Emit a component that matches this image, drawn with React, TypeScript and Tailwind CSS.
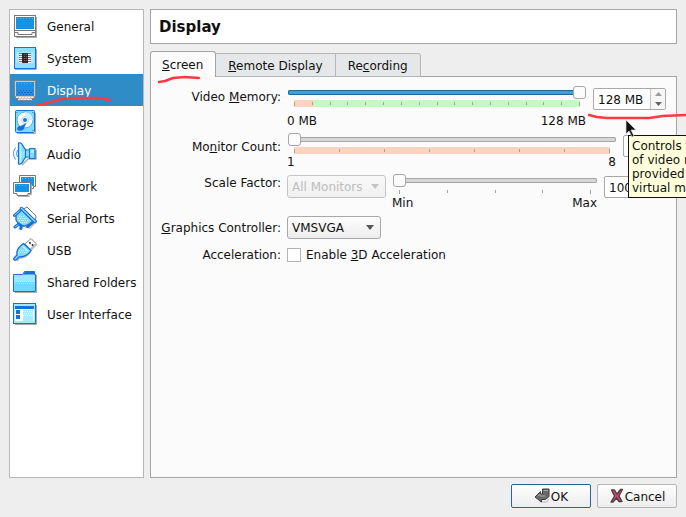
import React from "react";

const B = "#1a6fd4";
const L = "#7fdcfd";

function Icon({ name }: { name: string }) {
  return (
    <svg width="24" height="24" viewBox="0 0 24 24" className="shrink-0" aria-hidden="true">
      {name === "General" && (
        <g>
          <path d="M3 23.500H23.500V3" fill="none" stroke="#aaa" />
          <rect x="1.500" y="1.500" width="21" height="21" fill="#fff" stroke="#777" />
          <rect x="3" y="3" width="18" height="12" fill="#1492e6" />
          <path d="M4 4.500h16" stroke="#4db1f2" strokeDasharray="1 2" />
          <path d="M2 16.500h20M2 18.500h3v2h14v-2h3" fill="none" stroke="#777" />
        </g>
      )}
      {name === "System" && (
        <g>
          <path d="M2 23.500H23.500V3" fill="none" stroke="#aaa" />
          <rect x="1.500" y="1.500" width="21" height="21" fill="#8be0fd" stroke={B} />
          <rect x="3" y="6" width="18" height="11" fill="#a9ebff" />
          <path d="M6 8.500h12M6 10.500h12M6 12.500h12M6 14.500h12M6 16.500h12" stroke="#fff" />
          <path d="M6 7.500h12M6 9.500h12M6 11.500h12M6 13.500h12M6 15.500h12" stroke="#3c86c8" />
          <rect x="9" y="7" width="6" height="10" fill="#2c2c2c" />
          <path d="M11.500 8v8M13.500 8v8" stroke="#666" strokeDasharray="1 1" />
        </g>
      )}
      {name === "Display" && (
        <g>
          <path d="M1.500 2.500h21v16h-1v2h-3v2h-13v-2h-3v-2h-1z" fill="#c9ccc6" stroke="#77868d" />
          <path d="M3 19.500h18M5 21.500h14" stroke="#eceee8" strokeDasharray="2 1" />
          <rect x="3" y="4" width="18" height="14" fill="#1e91e4" />
          <path d="M5 5.500h14" stroke="#59aeea" strokeDasharray="1 2" />
          <path d="M4 12.500h16M4 16.500h16" stroke="#1766c9" strokeDasharray="1 2" />
          <path d="M5 14.500h15" stroke="#1766c9" strokeDasharray="2 1" />
        </g>
      )}
      {name === "Storage" && (
        <g>
          <path d="M4 23.500H22.500V3" fill="none" stroke="#aaa" />
          <rect x="2.500" y=".5" width="19" height="22" rx="1" fill={L} stroke={B} />
          <circle cx="12" cy="10" r="8" fill="#fff" stroke="#4db4f1" />
          <path d="M12 2a8 8 0 0 1 8 8h-4a4 4 0 0 0-4-4z" fill="#cdf3ff" />
          <circle cx="12" cy="10" r="3.500" fill="none" stroke="#9be2fc" />
          <circle cx="12" cy="10" r="2" fill="#1673d6" />
          <path d="M4.500 20c-1-3 1-4 3-4l6-3-2 4c0 3-4 5-7 3z" fill={B} />
          <path d="M4 2v1M20 2v1M20 20v1" stroke={B} />
        </g>
      )}
      {name === "Audio" && (
        <g strokeLinejoin="round">
          <path d="M9 23l6-6h8V8" fill="none" stroke="#aaa" strokeWidth="1.500" />
          <path d="M5.500 1c2-1 4 1 6 5.500l2 1.500h3V6.500h5.500v10h-5.500V15h-3l-2 1.500c-2 4.500-4 6.500-6 5.500z" fill={L} stroke={B} strokeWidth="1.200" />
          <path d="M16.500 7v9M12.500 8v7" stroke={B} />
          <path d="M7.500 2v19" stroke="#b5f0ff" strokeWidth="1.500" />
          <path d="M8 10.500h4M8 12.500h4M8 14.500h3" stroke="#c8f4ff" strokeDasharray="1 1" />
          <path d="M18 8h3v3h-3z" fill="#b5f0ff" />
          <path d="M4.500 8q-2 3.500 0 7M2.500 5.500q-4 6 0 12" fill="none" stroke="#3697e8" />
        </g>
      )}
      {name === "Network" && (
        <g>
          <path d="M6.500 1.500h16v11h-2v2h-12v-2h-2z" fill="#fff" stroke="#777" />
          <rect x="8" y="3" width="13" height="9" fill="#1492e6" />
          <path d="M5 22.500h11v-2h2.500v-10" fill="none" stroke="#aaa" />
          <path d="M.5 8.500h17v11h-2.500v2h-11v-2h-3.500z" fill="#fff" stroke="#777" />
          <rect x="2" y="10" width="14" height="8" fill="#1492e6" />
          <path d="M9 4.500h11M3 11.500h12" stroke="#62bcf5" strokeDasharray="1 2" />
        </g>
      )}
      {name === "Serial Ports" && (
        <g strokeLinejoin="round" strokeLinecap="round">
          <path d="M6 23l4-3 7 2 7-7" fill="none" stroke="#bbb" strokeWidth="1.500" />
          <path d="M10.500 3l3.500-2 9 9-.5 4z" fill="#fff" stroke="#777" />
          <path d="M8 3.500L20 15l-3 3-6 2-5-1-3-5V9z" fill={L} stroke={B} strokeWidth="1.300" />
          <path d="M8.500 2.500L22 15.500" stroke={B} strokeWidth="3.500" />
          <path d="M8.500 2.500L22 15.500" stroke="#8fe0ff" strokeWidth="1.300" />
          <path d="M1.500 9.500L7 4.500M14.500 20.500l5-4M2 21l4-3M8 22.500v-3" stroke={B} strokeWidth="3" />
          <path d="M1.800 9.200L6.500 5M2.200 20.800L5 19" stroke={L} strokeWidth="1" />
          <path d="M6 10.500h6M5 12.500h9M6 14.500h10M7 16.500h7" stroke="#c8f5ff" strokeDasharray="1 1" strokeLinecap="butt" />
        </g>
      )}
      {name === "USB" && (
        <g strokeLinejoin="round">
          <path d="M12 6l6-5.500 5 5-6 6z" fill="#fff" stroke="#888" />
          <path d="M17 4v2M19.500 6v2" stroke="#333" strokeWidth="1.500" />
          <path d="M4 23l3-3c5 0 9-2 12-9l5-5" fill="none" stroke="#bbb" strokeWidth="1.500" />
          <path d="M10.500 5.500l7.500 7c-3 5-7 6.500-12 6.500l-3 3c-1 1-3-1-2-2l3-3c-1-5 2-8.500 6.500-11.500z" fill={L} stroke={B} strokeWidth="1.300" />
          <path d="M9.500 8l6 5.500" stroke="#b9f1ff" strokeWidth="1.500" />
          <path d="M6 12.500h7M5 14.500h9" stroke="#c8f5ff" strokeDasharray="1 1" />
        </g>
      )}
      {name === "Shared Folders" && (
        <g>
          <path d="M2 22.500H23.500V5" fill="none" stroke="#aaa" />
          <path d="M.5 4.500h9l2-3h10v3h1v17H.5z" fill="#9ce7fe" stroke={B} />
          <path d="M10 4.500l2-3h9.500v3z" fill={B} />
          <rect x="1" y="12" width="21" height="9" fill="#6ed8ff" />
          <path d="M1 11.500h21M2 13.500h20" stroke="#acefff" strokeDasharray="1 1" />
        </g>
      )}
      {name === "User Interface" && (
        <g>
          <path d="M2 22.500H23.500V3" fill="none" stroke="#aaa" />
          <rect x=".5" y="1.500" width="22" height="20" fill="#a4e8fe" stroke={B} />
          <rect x="2" y="4" width="19" height="3" fill={B} />
          <rect x="2" y="7" width="19" height="12" fill="#fff" />
          <path d="M3 8h4v4H3zM3 13h4v4H3z" fill={B} />
          <rect x="10" y="8" width="10" height="11" fill="#a6ebff" />
          <path d="M10 9.500h10M11 11.500h9M10 13.500h10" stroke="#e3faff" strokeDasharray="1 1" />
        </g>
      )}
    </svg>
  );
}

const sections = ["General", "System", "Display", "Storage", "Audio", "Network", "Serial Ports", "USB", "Shared Folders", "User Interface"];

const slider =
  "m-0 mb-px block h-[13px] w-full appearance-none bg-transparent [&::-webkit-slider-runnable-track]:h-[5px] [&::-webkit-slider-runnable-track]:rounded-[2px] [&::-webkit-slider-thumb]:-mt-[4px] [&::-webkit-slider-thumb]:h-[13px] [&::-webkit-slider-thumb]:w-[13px] [&::-webkit-slider-thumb]:appearance-none [&::-webkit-slider-thumb]:rounded-[3px] [&::-webkit-slider-thumb]:border [&::-webkit-slider-thumb]:border-[#a6a6a6] [&::-webkit-slider-thumb]:bg-[#fcfcfc]";
const grayTrack =
  "[&::-webkit-slider-runnable-track]:bg-[#d6d6d6] [&::-webkit-slider-runnable-track]:shadow-[inset_0_0_0_1px_#a5a5a5]";
const blueTrack =
  "[&::-webkit-slider-runnable-track]:bg-[#3b9fe0] [&::-webkit-slider-runnable-track]:shadow-[inset_0_0_0_1px_#206796]";

function Ticks({ count, className }: { count: number; className: string }) {
  return (
    <div className={`mx-[7px] flex items-center justify-between ${className}`}>
      {Array.from({ length: count }, (_, i) => (
        <span key={i} className={`w-px bg-[#a5a5a5] ${i === 0 || i === count - 1 ? "h-1" : "h-[3px]"}`} />
      ))}
    </div>
  );
}

function Spin({ id, value, className }: { id: string; value: string; className: string }) {
  return (
    <div className={`mt-[2px] flex h-[22px] shrink-0 overflow-hidden rounded-[2px] border border-[#a8a8a8] bg-white ${className}`}>
      <input id={id} aria-label={id} defaultValue={value} className="w-0 min-w-0 flex-1 pt-px pl-1 outline-none" />
      <div className="flex w-[15px] flex-col border-l border-[#c4c4c4] bg-[#f7f7f7]">
        <button aria-label="Increase" className="flex flex-1 items-center justify-center">
          <svg width="7" height="4" viewBox="0 0 7 4"><path d="M0 4l3.500-4L7 4z" fill="#9c9c9c" /></svg>
        </button>
        <button aria-label="Decrease" className="flex flex-1 items-center justify-center">
          <svg width="7" height="4" viewBox="0 0 7 4"><path d="M0 0l3.500 4L7 0z" fill="#666" /></svg>
        </button>
      </div>
    </div>
  );
}

function Combo({ id, value, disabled, className }: { id: string; value: string; disabled?: boolean; className: string }) {
  return (
    <div className={`relative shrink-0 ${disabled ? "text-[#bebebe]" : "text-[#111]"} ${className}`}>
      <select
        id={id}
        aria-label={id}
        disabled={disabled}
        className={`h-[23px] w-full appearance-none rounded-[3px] border bg-linear-to-b pl-1 opacity-100 ${
          disabled ? "border-[#c4c4c4] from-[#f8f8f8] to-[#f0f0f0]" : "border-[#a8a8a8] from-[#fdfdfd] to-[#ededed]"
        }`}
      >
        <option>{value}</option>
      </select>
      <svg width="8" height="5" viewBox="0 0 8 5" className="pointer-events-none absolute top-[9px] right-[7px]">
        <path d="M0 0h8L4 5z" fill={disabled ? "#c4c4c4" : "#555"} />
      </svg>
    </div>
  );
}

function Mark({ d, className }: { d: string; className: string }) {
  return (
    <svg width="100" height="12" viewBox="0 0 100 12" className={`pointer-events-none absolute z-10 ${className}`} aria-hidden="true">
      <path d={d} fill="none" stroke="#fb3a41" strokeWidth="2.500" strokeLinecap="round" strokeLinejoin="round" />
    </svg>
  );
}

const tab = "-mb-px h-[24px] border border-l-0 border-[#b5b5b5] bg-[#e6e7e8] px-3 pt-px";
const dialogButton =
  "flex h-6 w-20 items-center justify-center rounded-[2px] border bg-linear-to-b from-[#fefefe] to-[#ededed]";

export default function App() {
  return (
    <div className="flex min-h-screen flex-col gap-[6px] overflow-hidden bg-[#eeeeee] p-[9px] font-['DejaVu_Sans',sans-serif] text-[12px] leading-[14px] text-[#111]">
      <div className="flex flex-1 gap-[6px]">
        <nav className="w-[135px] shrink-0 border border-[#b7b7b7] bg-white">
          <ul>
            {sections.map((name) => (
              <li key={name} className={`relative ${name === "Display" ? "bg-[#308cc6] text-white" : ""}`}>
                <a href="#" className="flex h-8 items-center gap-[10px] pl-[3px] whitespace-nowrap">
                  <Icon name={name} />
                  <span className="pt-[2px]">{name}</span>
                </a>
                {name === "Display" && <Mark className="top-[22px] left-[26px]" d="M2 9L12 7L25 3L40 2L62 2L74 4" />}
              </li>
            ))}
          </ul>
        </nav>

        <main className="flex min-w-0 flex-1 flex-col">
          <h1 className="mb-[7px] flex h-[35px] items-center border border-[#a5a5a5] bg-white pl-2 text-[15px] font-bold">Display</h1>
          <div role="tablist" className="relative flex items-end">
            <button role="tab" aria-selected="true" className="relative z-10 -mb-px h-[26px] rounded-t-[3px] border border-b-0 border-[#a5a5a5] bg-[#fbfbfb] pr-3 pl-[11px]">
              <u>S</u>creen
            </button>
            <button role="tab" className={tab}>
              <u>R</u>emote Display
            </button>
            <button role="tab" className={`${tab} rounded-tr-[3px]`}>
              Re<u>c</u>ording
            </button>
            <Mark className="top-[23px] left-[7px]" d="M2 8L8 7L16 4L28 3L42 4" />
          </div>
          <section className="grid flex-1 grid-cols-[120px_minmax(0,1fr)] content-start gap-x-[6px] gap-y-[5px] border border-[#a5a5a5] bg-[#fbfbfb] px-[10px] pt-[9px]">
            <label htmlFor="Video memory size" className="pt-1 text-right">Video <u>M</u>emory:</label>
            <div className="relative flex gap-[6px]">
              <div className="flex-1">
                <div className="px-px">
                  <input type="range" aria-label="Video memory" defaultValue="100" className={`${slider} ${blueTrack}`} />
                </div>
                <Ticks count={17} className="h-[7px] bg-linear-to-r from-[#fdd2bf] from-[7%] to-[#c1fcc1] to-[7%]" />
                <div className="mt-[7px] flex justify-between pr-px"><span>0 MB</span><span>128 MB</span></div>
              </div>
              <div className="relative w-[73px]">
                <Spin id="Video memory size" value="128 MB" className="w-full" />
                <Mark className="top-[26px] -left-[6px]" d="M2 3L10 5L20 6L62 6L76 4L100 3" />
                <svg width="12" height="19" viewBox="0 0 12 19" className="absolute top-[33px] left-[32px] z-30" aria-hidden="true">
                  <path d="M1 1v14l3-3 3 6 2-1-3-6h5z" fill="#111" stroke="#ddd" strokeWidth=".7" />
                </svg>
                <div role="tooltip" className="absolute top-[49px] left-[35px] z-20 border border-[#111] bg-[#ffffdc] px-[3px] pt-[3px] pb-[2px] whitespace-nowrap">
                  Controls the amount<br />of video memory<br />provided to the<br />virtual machine.
                </div>
              </div>
            </div>

            <label htmlFor="Monitors" className="pt-[7px] text-right">Mo<u>n</u>itor Count:</label>
            <div className="flex gap-[6px]">
              <div className="flex-1">
                <div className="px-px">
                  <input type="range" aria-label="Monitor count" defaultValue="0" className={`${slider} ${grayTrack}`} />
                </div>
                <Ticks count={8} className="h-[7px] bg-[#fdd2bf]" />
                <div className="mt-px flex justify-between pr-px"><span>1</span><span>8</span></div>
              </div>
              <Spin id="Monitors" value="1" className="w-[43px]" />
            </div>

            <label htmlFor="Scale monitors" className="pt-[2px] text-right">Scale Factor:</label>
            <div className="flex gap-[6px]">
              <Combo id="Scale monitors" value="All Monitors" disabled className="mt-px w-[99px]" />
              <div className="flex-1">
                <div className="px-px">
                  <input type="range" aria-label="Scale factor" defaultValue="0" className={`${slider} ${grayTrack}`} />
                </div>
                <Ticks count={5} className="h-[7px]" />
                <div className="mt-px flex justify-between pr-px"><span>Min</span><span>Max</span></div>
              </div>
              <Spin id="Scale percent" value="100%" className="w-[62px]" />
            </div>

            <label htmlFor="Graphics controller" className="pt-[6px] text-right whitespace-nowrap"><u>G</u>raphics Controller:</label>
            <Combo id="Graphics controller" value="VMSVGA" className="mt-px w-[94px]" />

            <span className="pt-1 text-right">Acceleration:</span>
            <label className="flex items-center gap-[5px] pt-1">
              <input type="checkbox" className="h-[14px] w-[14px] appearance-none border border-[#b5b5b5] bg-white" />
              <span>Enable <u>3</u>D Acceleration</span>
            </label>
          </section>
        </main>
      </div>

      <footer className="flex justify-end gap-[6px]">
        <button className={`${dialogButton} border-[#206796]`}>
          <svg width="17" height="16" viewBox="0 0 17 16" aria-hidden="true">
            <path d="M3 14l10-1 2-3v3l-3 2z" fill="#ccc" />
            <path d="M8.500 1H15v7.500l-3.500 3H7.500V14L1 9l5.500-5.500V6h2z" fill="#6a6a6a" stroke="#3d3d3d" />
            <path d="M9.500 2.500h4.500M3.500 8.500L6 6v2h5" fill="none" stroke="#a5a5a5" />
          </svg>
          <span className="pt-px">OK</span>
        </button>
        <button className={`${dialogButton} border-[#b5b5b5]`}>
          <svg width="16" height="16" viewBox="0 0 16 16" aria-hidden="true">
            <path d="M2.500 2h3l2.500 4 3.500-4.500h2L10 8l3 5.500h-3L7.500 10 4 14H2l3.500-6z" fill="#cf4068" stroke="#444" strokeWidth="1.300" strokeLinejoin="round" />
          </svg>
          <span className="pt-px">Cancel</span>
        </button>
      </footer>
    </div>
  );
}
